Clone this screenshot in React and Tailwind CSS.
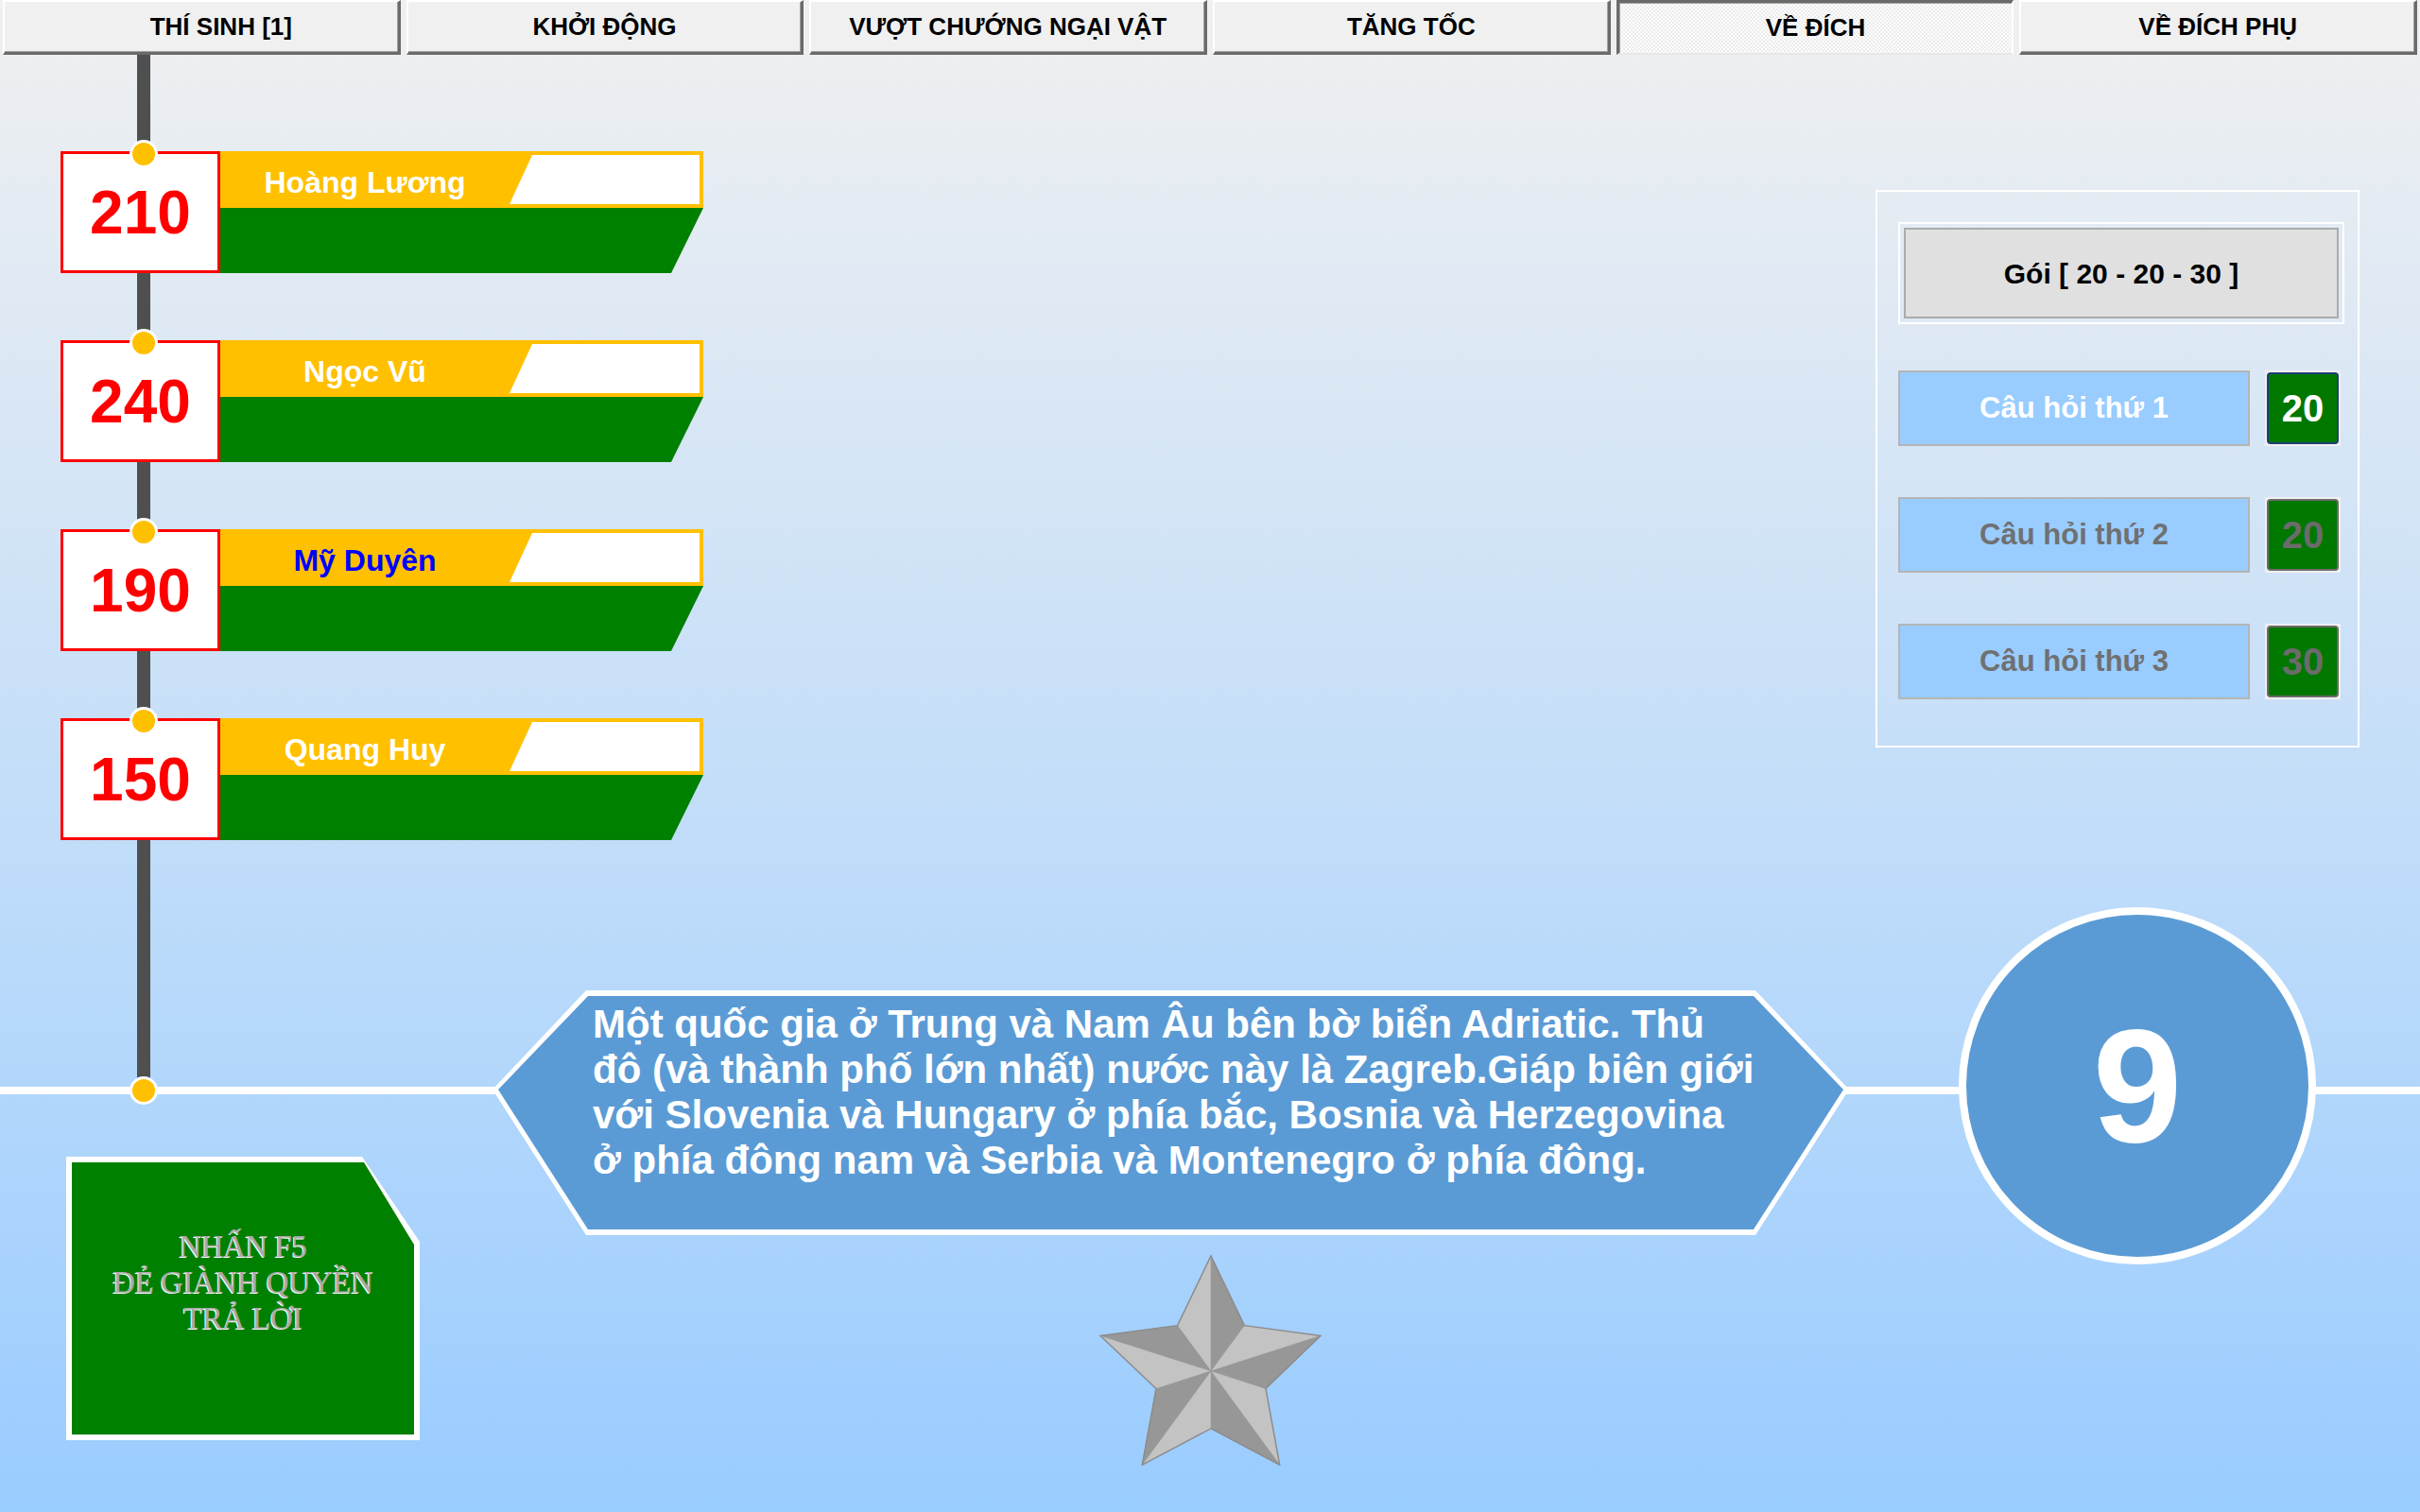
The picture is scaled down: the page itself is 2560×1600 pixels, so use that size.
import React from "react";

const tabs = ["THÍ SINH [1]", "KHỞI ĐỘNG", "VƯỢT CHƯỚNG NGẠI VẬT", "TĂNG TỐC", "VỀ ĐÍCH", "VỀ ĐÍCH PHỤ"];

const players = [
  { name: "Hoàng Lương", score: 210, color: "text-white" },
  { name: "Ngọc Vũ", score: 240, color: "text-white" },
  { name: "Mỹ Duyên", score: 190, color: "text-[#0000ff]" },
  { name: "Quang Huy", score: 150, color: "text-white" },
];

const questions = [
  { label: "Câu hỏi thứ 1", points: 20, active: true },
  { label: "Câu hỏi thứ 2", points: 20, active: false },
  { label: "Câu hỏi thứ 3", points: 30, active: false },
];

const questionLines = [
  "Một quốc gia ở Trung và Nam Âu bên bờ biển Adriatic. Thủ",
  "đô (và thành phố lớn nhất) nước này là Zagreb.Giáp biên giới",
  "với Slovenia và Hungary ở phía bắc, Bosnia và Herzegovina",
  "ở phía đông nam và Serbia và Montenegro ở phía đông.",
];

function Dot({ className }) {
  return <div className={`w-[30px] h-[30px] rounded-full border-[3px] border-white bg-[#ffc000] ${className}`} />;
}

function Tab({ label, active, first }) {
  if (active) {
    return (
      <div className="flex items-center justify-center h-[58px] border-t-[3px] border-l-[3px] border-t-[#6a6a6a] border-l-[#6a6a6a] border-r-2 border-b-2 border-r-white border-b-[#e8e8e8] shadow-[inset_1px_1px_0_#a0a0a0] bg-[repeating-conic-gradient(#ffffff_0%_25%,#ebebeb_0%_50%)] bg-[length:4px_4px] text-[26px] font-bold text-black">
        {label}
      </div>
    );
  }
  return (
    <div
      className={`flex items-center justify-center h-[58px] bg-[#f0f0f0] border-t-2 border-l-2 border-t-white border-l-white border-r-[3px] border-b-[3px] border-r-[#6a6a6a] border-b-[#6a6a6a] shadow-[inset_-1px_-1px_0_#a0a0a0] text-[26px] font-bold text-black ${
        first ? "pl-[42px]" : ""
      }`}
    >
      {label}
    </div>
  );
}

function PlayerRow({ name, score, color }) {
  return (
    <div className="flex">
      <div className="relative w-[169px] h-[129px] border-[3px] border-[#ff0000] bg-white flex items-center justify-center">
        <span className="text-[64px] font-bold leading-none text-[#ff0000]">{score}</span>
        <Dot className="absolute left-[70px] top-[-15px]" />
      </div>
      <div className="flex flex-col w-[511px]">
        <div className="flex items-center h-[60px] bg-[#ffc000] pr-[4px]">
          <div className={`w-[306px] pt-[5px] text-center text-[32px] font-bold leading-none ${color}`}>{name}</div>
          <div className="w-[201px] h-[52px] bg-white [clip-path:polygon(24px_0,100%_0,100%_100%,0_100%)]" />
        </div>
        <div className="h-[69px] bg-[#008000] [clip-path:polygon(0_0,100%_0,calc(100%_-_34px)_100%,0_100%)]" />
      </div>
    </div>
  );
}

function Star() {
  const T = [119, 0], R = [237, 86], BR = [193, 225], BL = [45, 225], L = [0, 86];
  const i1 = [155, 75], i2 = [178, 143], i3 = [119, 186], i4 = [60, 143], i5 = [83, 75];
  const C = [119, 124];
  const tri = (a, b) => [a, b, C].map((p) => p.join(",")).join(" ");
  const light = [tri(i5, T), tri(i1, R), tri(i2, BR), tri(i3, BL), tri(i4, L)];
  const dark = [tri(T, i1), tri(R, i2), tri(BR, i3), tri(BL, i4), tri(L, i5)];
  const outline = [T, i1, R, i2, BR, i3, BL, i4, L, i5].map((p) => p.join(",")).join(" ");
  return (
    <svg width="237" height="225" viewBox="-2 -2 241 229" className="block overflow-visible">
      {light.map((p, i) => (
        <polygon key={"l" + i} points={p} fill="#c3c3c3" stroke="#c3c3c3" strokeWidth="0.5" />
      ))}
      {dark.map((p, i) => (
        <polygon key={"d" + i} points={p} fill="#979797" stroke="#979797" strokeWidth="0.5" />
      ))}
      <polygon points={outline} fill="none" stroke="#8c8c8c" strokeWidth="1.5" strokeLinejoin="miter" />
    </svg>
  );
}

export default function App() {
  return (
    <div className="relative w-[2560px] h-[1600px] overflow-hidden bg-linear-to-b from-[#f0f0f0] to-[#99ccff] font-['Liberation_Sans',Arial,sans-serif]">
      {/* timeline lines */}
      <div className="absolute left-0 top-[1150px] h-[8px] w-full bg-white" />
      <div className="absolute left-[145px] top-[58px] h-[1096px] w-[14px] bg-[#4f4f4f]" />
      <Dot className="absolute left-[137px] top-[1139px]" />

      {/* tabs */}
      <div className="relative grid grid-cols-6 gap-[6px] px-[3px] h-[60px]">
        {tabs.map((t, i) => (
          <Tab key={t} label={t} active={t === "VỀ ĐÍCH"} first={i === 0} />
        ))}
      </div>

      {/* players + question pack */}
      <div className="relative flex justify-between h-[900px]">
        <div className="flex flex-col gap-[71px] pl-[64px] pt-[100px]">
          {players.map((p) => (
            <PlayerRow key={p.name} {...p} />
          ))}
        </div>

        <div className="mt-[141px] mr-[64px] w-[512px] h-[590px] border-2 border-white pt-[32px] pl-[22px] pr-[14px] flex flex-col">
          <div className="h-[108px] border-2 border-white p-[4px]">
            <div className="h-full border-2 border-[#ababab] bg-[#e0e0e0] flex items-center justify-center text-[30px] font-bold text-black">
              Gói [ 20 - 20 - 30 ]
            </div>
          </div>
          <div className="flex flex-col gap-[54px] mt-[49px]">
            {questions.map((q) => (
              <div key={q.label} className="flex gap-[16px]">
                <div
                  className={`w-[372px] h-[80px] bg-[#99ccff] border-2 border-[#b5b5b5] flex items-center justify-center text-[31px] font-bold ${
                    q.active ? "text-white" : "text-[#707070]"
                  }`}
                >
                  {q.label}
                </div>
                <div className="w-[80px] h-[80px] bg-[#f0f0f0] p-[2px]">
                  <div
                    className={`h-full rounded-[4px] border-2 bg-[#007800] flex items-center justify-center text-[40px] font-bold ${
                      q.active ? "border-[#1f3f73] text-white" : "border-[#6b6b6b] text-[#6b6b6b]"
                    }`}
                  >
                    {q.points}
                  </div>
                </div>
              </div>
            ))}
          </div>
        </div>
      </div>

      {/* question band */}
      <div className="relative flex items-start h-[640px]">
        <div className="w-[521px] pl-[70px] pt-[264px]">
          <div className="w-[374px] h-[300px] bg-white p-[6px] [clip-path:polygon(0_0,313px_0,100%_90px,100%_100%,0_100%)]">
            <div className="h-full bg-[#008000] pt-[70px] flex flex-col items-center [clip-path:polygon(0_0,309px_0,100%_87px,100%_100%,0_100%)] font-['Liberation_Serif','Times_New_Roman',serif] text-[33px] leading-[38px] tracking-[-0.5px] text-[#a8a8a8] [text-shadow:-1px_1px_0_#ffffff] text-center">
              <div>NHẤN F5</div>
              <div>ĐẺ GIÀNH QUYỀN</div>
              <div>TRẢ LỜI</div>
            </div>
          </div>
        </div>

        <div className="w-[1435px] pt-[88px] flex flex-col">
          <div className="h-[259px] bg-white p-[6px] [clip-path:polygon(99px_0,calc(100%_-_99px)_0,100%_105px,calc(100%_-_99px)_100%,99px_100%,0_105px)]">
            <div className="h-full bg-[#5b9bd5] pl-[100px] pt-[6px] [clip-path:polygon(95px_0,calc(100%_-_95px)_0,100%_99px,calc(100%_-_95px)_100%,95px_100%,0_99px)] text-[42px] leading-[48px] font-bold text-white">
              {questionLines.map((l) => (
                <div key={l} className="whitespace-nowrap">{l}</div>
              ))}
            </div>
          </div>
          <div className="ml-[641px] mt-[20px]">
            <Star />
          </div>
        </div>

        <div className="ml-[116px] w-[378px] h-[378px] rounded-full border-8 border-white bg-[#5b9bd5] flex items-center justify-center">
          <span className="text-[170px] font-bold leading-none text-white">9</span>
        </div>
      </div>
    </div>
  );
}
